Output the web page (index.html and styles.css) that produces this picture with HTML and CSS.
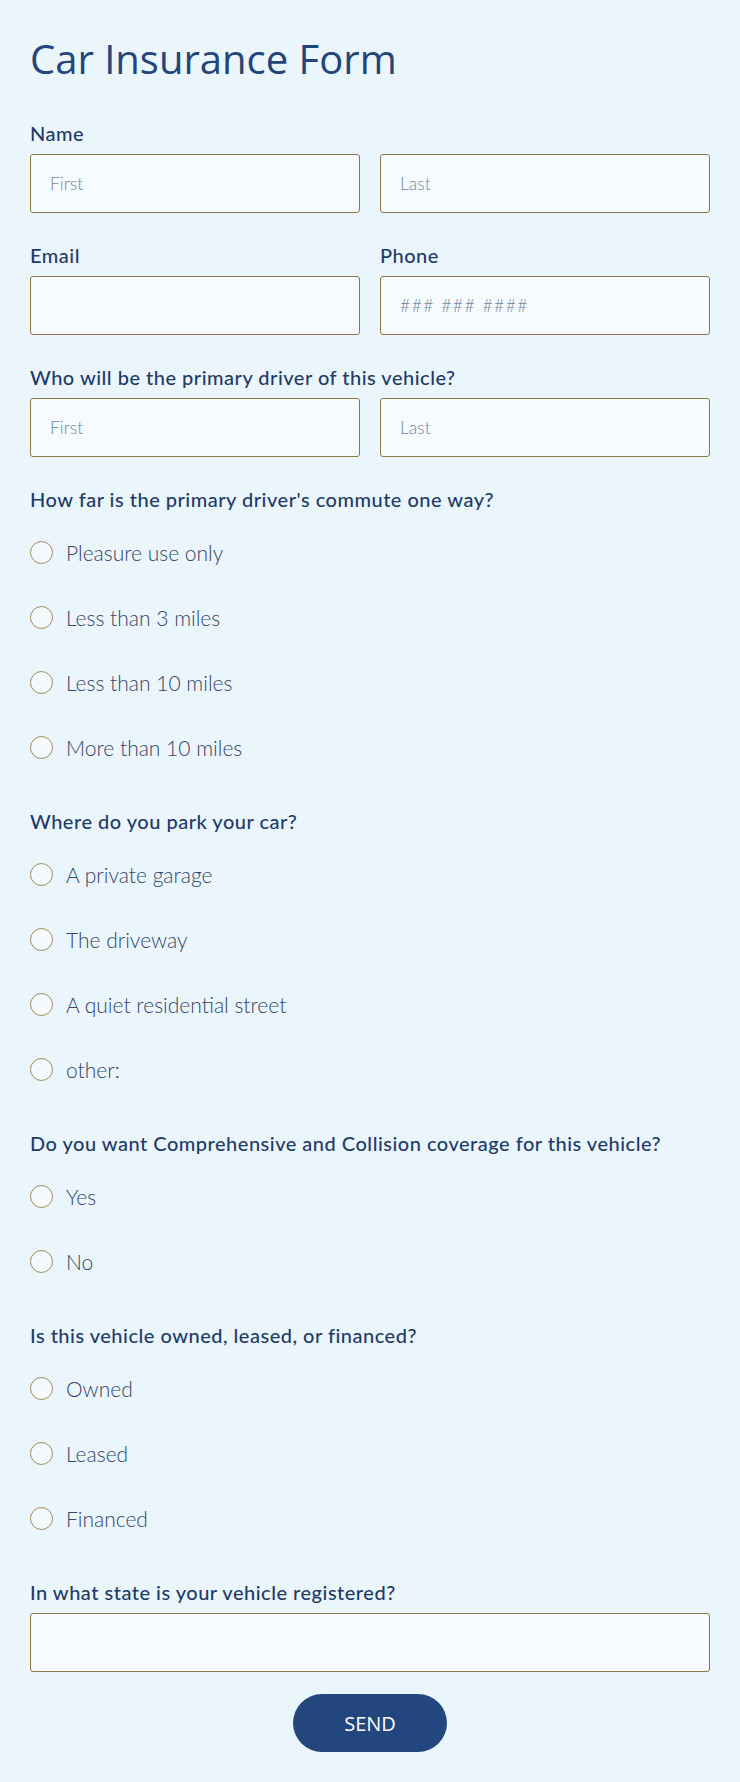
FILE: index.html
```html
<!DOCTYPE html>
<html lang="en">
<head>
<meta charset="utf-8">
<title>Car Insurance Form</title>
<link rel="stylesheet" href="styles.css">
</head>
<body>
<form class="form">
  <h1 class="title">Car Insurance Form</h1>

  <div class="field">
    <label class="label">Name</label>
    <div class="pair">
      <input class="input" type="text" placeholder="First">
      <input class="input" type="text" placeholder="Last">
    </div>
  </div>

  <div class="pair field">
    <div>
      <label class="label">Email</label>
      <input class="input" type="email">
    </div>
    <div>
      <label class="label">Phone</label>
      <input class="input phone" type="tel" placeholder="### ### ####">
    </div>
  </div>

  <div class="field">
    <label class="label">Who will be the primary driver of this vehicle?</label>
    <div class="pair">
      <input class="input" type="text" placeholder="First">
      <input class="input" type="text" placeholder="Last">
    </div>
  </div>

  <div class="field radios">
    <div class="label">How far is the primary driver's commute one way?</div>
    <label class="option"><input class="radio" type="radio" name="commute"><span>Pleasure use only</span></label>
    <label class="option"><input class="radio" type="radio" name="commute"><span>Less than 3 miles</span></label>
    <label class="option"><input class="radio" type="radio" name="commute"><span>Less than 10 miles</span></label>
    <label class="option"><input class="radio" type="radio" name="commute"><span>More than 10 miles</span></label>
  </div>

  <div class="field radios">
    <div class="label">Where do you park your car?</div>
    <label class="option"><input class="radio" type="radio" name="park"><span>A private garage</span></label>
    <label class="option"><input class="radio" type="radio" name="park"><span>The driveway</span></label>
    <label class="option"><input class="radio" type="radio" name="park"><span>A quiet residential street</span></label>
    <label class="option"><input class="radio" type="radio" name="park"><span>other:</span></label>
  </div>

  <div class="field radios">
    <div class="label">Do you want Comprehensive and Collision coverage for this vehicle?</div>
    <label class="option"><input class="radio" type="radio" name="cov"><span>Yes</span></label>
    <label class="option"><input class="radio" type="radio" name="cov"><span>No</span></label>
  </div>

  <div class="field radios">
    <div class="label">Is this vehicle owned, leased, or financed?</div>
    <label class="option"><input class="radio" type="radio" name="own"><span>Owned</span></label>
    <label class="option"><input class="radio" type="radio" name="own"><span>Leased</span></label>
    <label class="option"><input class="radio" type="radio" name="own"><span>Financed</span></label>
  </div>

  <div class="field last">
    <label class="label">In what state is your vehicle registered?</label>
    <input class="input" type="text">
  </div>

  <div class="actions">
    <button class="send" type="button">SEND</button>
  </div>
</form>
</body>
</html>
```

FILE: styles.css
```css
html, body {
  margin: 0;
  padding: 0;
  background: #eaf5fc;
}

.form {
  box-sizing: border-box;
  width: 740px;
  padding: 34px 30px 30px;
  font-family: "Lato", "Open Sans", sans-serif;
}

.title {
  margin: 0 0 38px;
  font-family: "Open Sans", sans-serif;
  font-weight: 400;
  font-size: 40px;
  line-height: 50px;
  color: #23457a;
}

.field {
  margin-bottom: 31px;
}

.field.radios {
  margin-bottom: 30px;
}

.field.last {
  margin-bottom: 22px;
}

.pair {
  display: grid;
  grid-template-columns: 1fr 1fr;
  column-gap: 20px;
}

.label {
  display: block;
  margin-bottom: 10px;
  font-size: 20px;
  line-height: 22px;
  font-weight: 500;
  letter-spacing: 0.5px;
  color: #1f3b68;
}

.input {
  display: block;
  box-sizing: border-box;
  width: 100%;
  height: 59px;
  margin: 0;
  padding: 0 19px;
  border: 1px solid #8c7748;
  border-radius: 3px;
  background: #f5fbfe;
  font-family: inherit;
  font-size: 17.5px;
  font-weight: 300;
  color: #2b3f63;
  outline: none;
}

.input::placeholder {
  color: #74869f;
  opacity: 1;
}

.input.phone::placeholder {
  letter-spacing: 1.5px;
}

.option {
  display: flex;
  align-items: center;
  gap: 13px;
  height: 65px;
  font-size: 21px;
  font-weight: 300;
  color: #34456a;
}

.radio {
  appearance: none;
  -webkit-appearance: none;
  box-sizing: border-box;
  width: 23px;
  height: 23px;
  margin: 0;
  border: 1px solid #a38b5a;
  border-radius: 50%;
  background: #f3f9fd;
  flex: none;
}

.actions {
  display: flex;
  justify-content: center;
}

.send {
  width: 154px;
  height: 58px;
  border: none;
  border-radius: 29px;
  background: #23467e;
  color: #ffffff;
  font-family: "Open Sans", sans-serif;
  font-size: 20px;
  font-weight: 400;
}
```
